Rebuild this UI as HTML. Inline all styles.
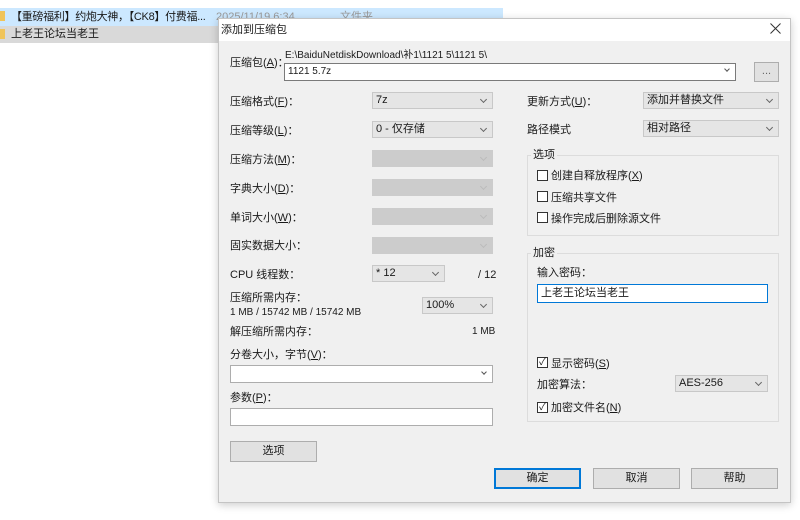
<!DOCTYPE html>
<html><head><meta charset="utf-8"><style>
*{margin:0;padding:0;box-sizing:border-box}
body{width:800px;height:520px;background:#fff;position:relative;overflow:hidden;font-family:"Liberation Sans","Noto Sans CJK SC",sans-serif;font-size:11px;color:#1a1a1a}
.a{position:absolute;white-space:nowrap;line-height:14px;margin-top:1px}
.sel{position:absolute;background:#e5e5e5;border:1px solid #c8c8c8;height:17px;padding-left:3px;line-height:15px;font-size:11px}
.sel.d{background:#cccccc;border-color:#cccccc}
.sel:after{content:"";position:absolute;right:6px;top:4px;width:4px;height:4px;border-right:1px solid #666;border-bottom:1px solid #666;transform:rotate(45deg)}
.sel.d:after{border-color:#bbb}
.inp{position:absolute;background:#fff;border:1px solid #7a7a7a;height:18px;padding-left:3px;line-height:16px}
.btn{position:absolute;background:#e1e1e1;border:1px solid #adadad;text-align:center;line-height:19px;height:21px}
.grp{position:absolute;border:1px solid #dcdcdc}
.cb{position:absolute;width:11px;height:11px;border:1px solid #333;background:#fff}
u{text-decoration:underline}
.s{font-size:10px}
</style></head><body>
<div style="position:absolute;left:0;top:8px;width:503px;height:18px;background:#cce8ff"></div>
<div style="position:absolute;left:0;top:26px;width:218px;height:17px;background:#d9d9d9"></div>
<div style="position:absolute;left:0;top:11px;width:5px;height:10px;background:#f0c45a"></div>
<div style="position:absolute;left:0;top:29px;width:5px;height:10px;background:#f0c45a"></div>
<div class="a" style="left:11px;top:9px;letter-spacing:-0.3px">【重磅福利】约炮大神，【CK8】付费福...</div>
<div class="a" style="left:216px;top:9px;color:#999">2025/11/19 6:34</div>
<div class="a" style="left:340px;top:9px;color:#999">文件夹</div>
<div class="a" style="left:11px;top:26px">上老王论坛当老王</div>

<div style="position:absolute;left:218px;top:18px;width:573px;height:485px;background:#f0f0f0;border:1px solid #c4c4c4;box-shadow:0 2px 8px rgba(0,0,0,.2)"></div>
<div style="position:absolute;left:219px;top:19px;width:571px;height:22px;background:#fff"></div>
<div class="a" style="left:221px;top:22px">添加到压缩包</div>
<svg style="position:absolute;left:770px;top:23px" width="11" height="11" viewBox="0 0 11 11"><path d="M0.5 0.5L10.5 10.5M10.5 0.5L0.5 10.5" stroke="#333" stroke-width="1"/></svg>

<div class="a" style="left:230px;top:55px">压缩包(<u>A</u>)：</div>
<div class="a s" style="left:285px;top:48px">E:\BaiduNetdiskDownload\补1\1121 5\1121 5\</div>
<div class="inp s" style="left:284px;top:63px;width:452px;height:18px">1121 5.7z<span style="position:absolute;right:6px;top:3px;width:4px;height:4px;border-right:1px solid #555;border-bottom:1px solid #555;transform:rotate(45deg)"></span></div>
<div class="btn" style="left:754px;top:62px;width:25px;height:20px;line-height:16px;color:#666">...</div>

<div class="a" style="left:230px;top:94px">压缩格式(<u>F</u>)：</div>
<div class="sel" style="left:372px;top:92px;width:121px">7z</div>
<div class="a" style="left:230px;top:123px">压缩等级(<u>L</u>)：</div>
<div class="sel" style="left:372px;top:121px;width:121px">0 - 仅存储</div>
<div class="a" style="left:230px;top:152px">压缩方法(<u>M</u>)：</div>
<div class="sel d" style="left:372px;top:150px;width:121px"></div>
<div class="a" style="left:230px;top:181px">字典大小(<u>D</u>)：</div>
<div class="sel d" style="left:372px;top:179px;width:121px"></div>
<div class="a" style="left:230px;top:210px">单词大小(<u>W</u>)：</div>
<div class="sel d" style="left:372px;top:208px;width:121px"></div>
<div class="a" style="left:230px;top:238px">固实数据大小：</div>
<div class="sel d" style="left:372px;top:237px;width:121px"></div>
<div class="a" style="left:230px;top:267px">CPU 线程数：</div>
<div class="sel" style="left:372px;top:265px;width:73px">* 12</div>
<div class="a" style="left:478px;top:267px">/ 12</div>
<div class="a" style="left:230px;top:290px">压缩所需内存：</div>
<div class="a s" style="left:230px;top:305px">1 MB / 15742 MB / 15742 MB</div>
<div class="sel" style="left:422px;top:297px;width:71px">100%</div>
<div class="a" style="left:230px;top:324px">解压缩所需内存：</div>
<div class="a s" style="left:472px;top:324px">1 MB</div>
<div class="a" style="left:230px;top:347px">分卷大小，字节(<u>V</u>)：</div>
<div class="inp" style="left:230px;top:365px;width:263px;border-color:#adadad"><span style="position:absolute;right:6px;top:4px;width:4px;height:4px;border-right:1px solid #555;border-bottom:1px solid #555;transform:rotate(45deg)"></span></div>
<div class="a" style="left:230px;top:390px">参数(<u>P</u>)：</div>
<div class="inp" style="left:230px;top:408px;width:263px;height:18px;border-color:#adadad"></div>
<div class="btn" style="left:230px;top:441px;width:87px">选项</div>

<div class="a" style="left:527px;top:94px">更新方式(<u>U</u>)：</div>
<div class="sel" style="left:643px;top:92px;width:136px">添加并替换文件</div>
<div class="a" style="left:527px;top:122px">路径模式</div>
<div class="sel" style="left:643px;top:120px;width:136px">相对路径</div>
<div class="grp" style="left:527px;top:155px;width:252px;height:81px"></div>
<div class="a" style="left:531px;top:147px;background:#f0f0f0;padding:0 2px">选项</div>
<div class="cb" style="left:537px;top:170px"></div><div class="a" style="left:551px;top:168px">创建自释放程序(<u>X</u>)</div>
<div class="cb" style="left:537px;top:191px"></div><div class="a" style="left:551px;top:190px">压缩共享文件</div>
<div class="cb" style="left:537px;top:212px"></div><div class="a" style="left:551px;top:211px">操作完成后删除源文件</div>
<div class="grp" style="left:527px;top:253px;width:252px;height:169px"></div>
<div class="a" style="left:531px;top:245px;background:#f0f0f0;padding:0 2px">加密</div>
<div class="a" style="left:537px;top:265px">输入密码：</div>
<div class="inp" style="left:537px;top:284px;width:231px;height:19px;border-color:#0078d7">上老王论坛当老王</div>
<div class="cb" style="left:537px;top:357px;font-size:10px;line-height:9px;text-align:center">✓</div><div class="a" style="left:551px;top:356px">显示密码(<u>S</u>)</div>
<div class="a" style="left:537px;top:377px">加密算法：</div>
<div class="sel" style="left:675px;top:375px;width:93px">AES-256</div>
<div class="cb" style="left:537px;top:402px;font-size:10px;line-height:9px;text-align:center">✓</div><div class="a" style="left:551px;top:400px">加密文件名(<u>N</u>)</div>

<div class="btn" style="left:494px;top:468px;width:87px;border:2px solid #0078d7;line-height:17px">确定</div>
<div class="btn" style="left:593px;top:468px;width:87px">取消</div>
<div class="btn" style="left:691px;top:468px;width:87px">帮助</div>
</body></html>
